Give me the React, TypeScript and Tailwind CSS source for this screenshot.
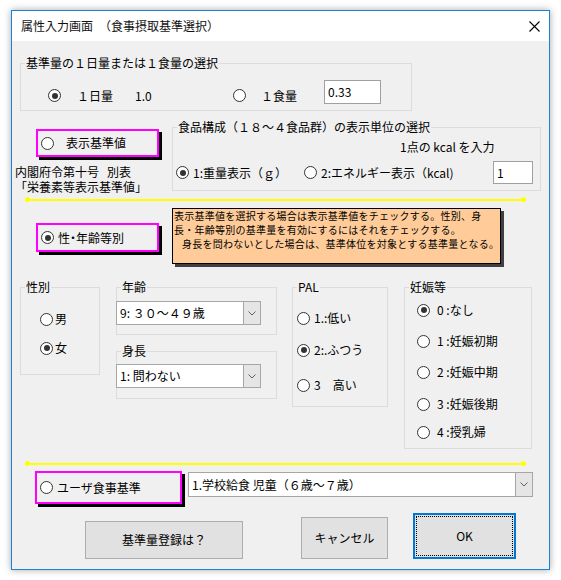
import clsx from 'clsx'
import type { ReactNode } from 'react'

const font = "font-['Noto_Sans_CJK_JP','Noto_Sans',sans-serif]"

function Radio({ checked }: { checked?: boolean }) {
  return (
    <span className="flex h-[13px] w-[13px] shrink-0 items-center justify-center rounded-full border border-[#333] bg-white">
      {checked && <span className="h-[6px] w-[6px] rounded-full bg-[#333]" />}
    </span>
  )
}

function Group({ label, className, children }: { label: string; className?: string; children?: ReactNode }) {
  return (
    <div className={clsx('shrink-0 border border-[#dcdcdc]', className)}>
      <div className="-mt-[8px] ml-[4px] w-fit whitespace-nowrap bg-[#f0f0f0] px-[1px] leading-[14px]">{label}</div>
      {children}
    </div>
  )
}

function Option({ checked, label, gap, className }: { checked?: boolean; label: string; gap: string; className?: string }) {
  return (
    <div className={clsx('flex h-[16px] items-center', className)}>
      <Radio checked={checked} />
      <span className={clsx('whitespace-nowrap leading-[16px]', gap)}>{label}</span>
    </div>
  )
}

function Combo({ value, className }: { value: string; className?: string }) {
  return (
    <div className={clsx('flex shrink-0 border border-[#a6a6a6] bg-white', className)}>
      <span className="flex flex-1 items-center whitespace-nowrap pl-[3px]">{value}</span>
      <span className="flex w-[17px] items-center justify-center border-l border-[#a6a6a6] bg-[#e5e5e5]">
        <svg width="8" height="5" viewBox="0 0 8 5">
          <polyline points="0.5,0.5 4,4 7.5,0.5" fill="none" stroke="#606060" strokeWidth="1" />
        </svg>
      </span>
    </div>
  )
}

function Marked({
  label,
  checked,
  gap,
  className,
}: {
  label: string
  checked?: boolean
  gap: string
  className?: string
}) {
  return (
    <div
      className={clsx(
        'flex shrink-0 items-center border-2 border-[#ff00ff] pl-[3px] shadow-[3px_3px_0_#000]',
        className,
      )}
    >
      <Radio checked={checked} />
      <span className={clsx('whitespace-nowrap', gap)}>{label}</span>
    </div>
  )
}

function YellowLine({ className }: { className?: string }) {
  return (
    <div className={clsx('ml-[13px] flex h-[5px] w-[501px] items-center', className)}>
      <span className="h-[5px] w-[5px] shrink-0 rounded-full bg-[#ffff00]" />
      <span className="h-[2px] flex-1 bg-[#ffff00]" />
      <span className="h-[5px] w-[5px] shrink-0 rounded-full bg-[#ffff00]" />
    </div>
  )
}

export default function App() {
  return (
    <div className={clsx('h-[580px] w-[561px] overflow-hidden bg-white pl-[11px] pt-[10px] text-[12px] text-black', font)}>
      <div className="flex h-[560px] w-[539px] flex-col border border-[#1883d7] shadow-[0_0_7px_rgba(0,0,0,0.35)]">
        {/* title bar */}
        <div className="flex h-[30px] shrink-0 items-center justify-between bg-white pl-[9px] pr-[9px]">
          <span className="text-[12px] text-[#111]">属性入力画面　（食事摂取基準選択）</span>
          <svg width="11" height="11" viewBox="0 0 11 11">
            <path d="M0.5 0.5 L10.5 10.5 M10.5 0.5 L0.5 10.5" stroke="#000" strokeWidth="1.1" />
          </svg>
        </div>

        <div className="flex flex-1 flex-col bg-[#f0f0f0]">
          {/* 基準量 */}
          <Group label="基準量の１日量または１食量の選択" className="ml-[8px] mt-[22px] h-[48px] w-[392px]">
            <div className="ml-[27px] mt-[10px] flex h-[24px] items-center">
              <div className="mt-[7px] flex w-[185px] items-center">
                <Radio checked />
                <span className="ml-[16px] w-[58px]">１日量</span>
                <span>1.0</span>
              </div>
              <div className="mt-[7px] flex w-[91px] items-center">
                <Radio />
                <span className="ml-[15px]">１食量</span>
              </div>
              <div className="flex h-[24px] w-[57px] items-center border border-[#a0a0a0] bg-white pl-[3px]">0.33</div>
            </div>
          </Group>

          {/* 表示基準値 / 食品構成 */}
          <div className="mt-[16px] flex h-[64px] items-start">
            <div className="w-[160px] shrink-0">
              <Marked label="表示基準値" gap="ml-[12px]" className="ml-[24px] mt-[2px] h-[28px] w-[123px]" />
              <div className="ml-[3px] mt-[7px] whitespace-nowrap leading-[15px]">
                <div>
                  内閣府令第十号<span className="ml-[8px]">別表</span>
                </div>
                <div>「栄養素等表示基準値」</div>
              </div>
            </div>
            <Group label="食品構成（１８～４食品群）の表示単位の選択" className="h-[64px] w-[369px]">
              <div className="ml-[227px] mt-[6px] leading-[14px]">1点の kcal を入力</div>
              <div className="ml-[3px] mt-[7px] flex h-[23px] items-center">
                <Option checked label="1:重量表示（ｇ）" gap="ml-[4px]" className="w-[128px]" />
                <Option label="2:エネルギー表示（kcal)" gap="ml-[4px]" className="w-[189px]" />
                <div className="flex h-[23px] w-[40px] items-center border border-[#a0a0a0] bg-white pl-[3px]">1</div>
              </div>
            </Group>
          </div>

          <YellowLine className="mt-[6px]" />

          {/* 性・年齢等別 / 説明 */}
          <div className="mt-[6px] flex h-[56px] items-start">
            <Marked
              label="性・年齢等別"
              checked
              gap="ml-[4px] [font-feature-settings:'palt']"
              className="ml-[24px] mt-[15px] h-[29px] w-[123px]"
            />
            <div className="ml-[13px] h-[56px] w-[329px] shrink-0 border border-black bg-[#ffcc99] pl-[1px] text-[10px] leading-[14px] tracking-[0.25px] shadow-[3px_3px_0_#404040]">
              <div className="whitespace-nowrap">表示基準値を選択する場合は表示基準値をチェックする。性別、身</div>
              <div className="whitespace-nowrap">長・年齢等別の基準量を有効にするにはそれをチェックする。</div>
              <div className="ml-[8px] whitespace-nowrap">身長を問わないとした場合は、基準体位を対象とする基準量となる。</div>
            </div>
          </div>

          {/* 属性 */}
          <div className="mt-[23px] flex items-start">
            <Group label="性別" className="ml-[8px] h-[88px] w-[80px]">
              <Option label="男" gap="ml-[2px]" className="ml-[19px] mt-[17px]" />
              <Option checked label="女" gap="ml-[2px]" className="ml-[19px] mt-[13px]" />
            </Group>
            <div className="ml-[16px] flex w-[161px] shrink-0 flex-col">
              <Group label="年齢" className="h-[48px] w-[161px]">
                <Combo value="9: ３０～４９歳" className="-ml-[1px] mt-[7px] h-[24px] w-[145px]" />
              </Group>
              <Group label="身長" className="mt-[16px] h-[48px] w-[161px]">
                <Combo value="1: 問わない" className="-ml-[1px] mt-[6px] h-[24px] w-[145px]" />
              </Group>
            </div>
            <Group label="PAL" className="ml-[15px] h-[120px] w-[96px]">
              <Option label="1.:低い" gap="ml-[4px]" className="ml-[4px] mt-[16px]" />
              <Option checked label="2:.ふつう" gap="ml-[4px]" className="ml-[4px] mt-[16px]" />
              <Option label="3　高い" gap="ml-[4px]" className="ml-[4px] mt-[19px]" />
            </Group>
            <Group label="妊娠等" className="ml-[16px] h-[162px] w-[128px]">
              <Option checked label="0 :なし" gap="ml-[7px]" className="ml-[12px] mt-[8px]" />
              <Option label="1 :妊娠初期" gap="ml-[7px]" className="ml-[12px] mt-[15px]" />
              <Option label="2 :妊娠中期" gap="ml-[7px]" className="ml-[12px] mt-[15px]" />
              <Option label="3 :妊娠後期" gap="ml-[7px]" className="ml-[12px] mt-[16px]" />
              <Option label="4 :授乳婦" gap="ml-[7px]" className="ml-[12px] mt-[12px]" />
            </Group>
          </div>

          <YellowLine className="mt-[12px]" />

          {/* ユーザ食事基準 */}
          <div className="mt-[5px] flex h-[34px] items-start">
            <Marked label="ユーザ食事基準" gap="ml-[4px]" className="ml-[23px] h-[33px] w-[147px]" />
            <Combo value="1.学校給食 児童（６歳～７歳）" className="ml-[6px] mt-[1px] h-[25px] w-[345px]" />
          </div>

          {/* buttons */}
          <div className="mt-[8px] flex h-[46px] items-end">
            <button type="button" className="ml-[73px] h-[38px] w-[158px] border border-[#adadad] bg-[#e1e1e1]">
              基準量登録は？
            </button>
            <button type="button" className="ml-[58px] h-[42px] w-[87px] border border-[#adadad] bg-[#e1e1e1]">
              キャンセル
            </button>
            <button type="button" className="ml-[25px] h-[46px] w-[103px] border-2 border-[#0078d7] bg-[#e1e1e1] p-[1px]">
              <span className="flex h-full w-full items-center justify-center border border-dotted border-black">OK</span>
            </button>
          </div>
        </div>
      </div>
    </div>
  )
}
